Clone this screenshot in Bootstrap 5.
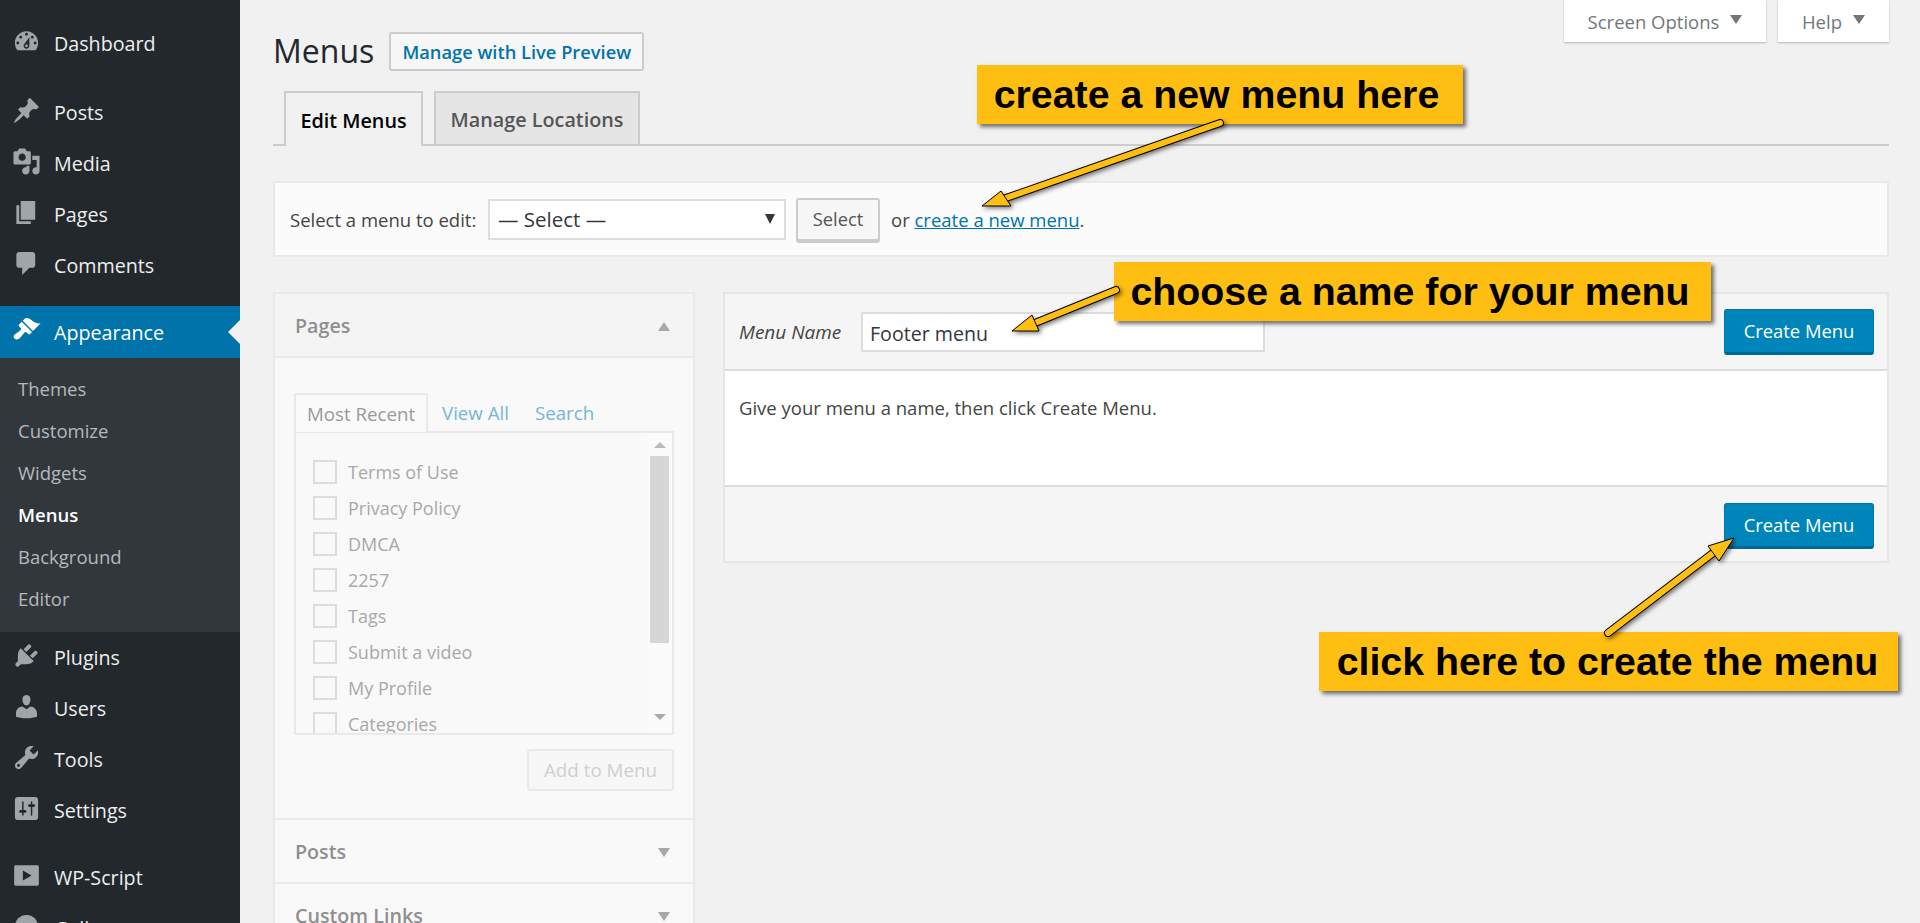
<!DOCTYPE html>
<html lang="en">

<head>
    <meta charset="UTF-8">
    <meta name="viewport" content="width=device-width, initial-scale=1.0">
    <title>Menus</title>
    <link rel="stylesheet" href="https://cdn.jsdelivr.net/npm/bootstrap@5.3.0/dist/css/bootstrap.min.css">
    <style>
        html, body {
            height: 923px;
            overflow: hidden;
        }

        body {
            background: #f1f1f1;
            color: #444;
            font-family: "Open Sans", sans-serif;
            font-size: 18.5px;
            position: relative;
        }

        /* sidebar */
        .wp-side {
            width: 240px;
            height: 923px;
            flex: none;
            background: #23282d;
            padding-top: 18px;
            overflow: hidden;
        }

        .wp-item {
            height: 51px;
            flex: none;
            padding-top: 1px;
            color: #eee;
            font-size: 19.7px;
            text-decoration: none;
            position: relative;
        }

        .wp-item svg {
            width: 29px;
            height: 29px;
            margin: -6px 13.5px 0 11.5px;
            fill: #a0a5aa;
            flex: none;
        }

        .wp-sep {
            height: 15px;
            flex: none;
        }

        .wp-item.wp-active {
            background: #0073aa;
            color: #fff;
            height: 52px;
        }

        .wp-item.wp-active svg {
            fill: #fff;
        }

        .wp-item.wp-active::after {
            content: "";
            position: absolute;
            right: 0;
            top: 14px;
            border: 12px solid transparent;
            border-right-color: #f1f1f1;
            border-left-width: 0;
        }

        .wp-sub {
            background: #32373c;
            padding: 10px 0 12px;
        }

        .wp-sub a {
            height: 42px;
            padding-left: 18px;
            color: #b4b9be;
            font-size: 18.5px;
            text-decoration: none;
        }

        .wp-sub a.wp-current {
            color: #fff;
            font-weight: 600;
        }

        /* main area */
        .wp-main {
            padding: 0 31px 0 33px;
            min-width: 0;
        }

        .wp-meta {
            height: 42px;
            margin-bottom: -10px;
        }

        .wp-meta-btn {
            height: 42px;
            padding-top: 2px;
            background: #fff;
            color: #72777c;
            font-size: 18.5px;
            box-shadow: 0 1px 2px rgba(0, 0, 0, .25);
        }

        .wp-meta-btn i {
            border: 6px solid transparent;
            border-top: 9px solid #72777c;
            border-bottom-width: 0;
            margin-left: 11px;
            margin-top: -6px;
        }

        .wp-title {
            height: 39px;
        }

        .wp-title h1 {
            font-size: 32px;
            font-weight: 400;
            color: #23282d;
            margin: 0 15px 0 0;
        }

        .wp-preview {
            height: 39px;
            width: 255px;
            padding: 0;
            background: #f7f7f7;
            border: 2px solid #ccc;
            border-radius: 3px;
            color: #0073aa;
            font-size: 18.3px;
            font-weight: 600;
        }

        .wp-tabs {
            margin-top: 20px;
            height: 55px;
            padding-left: 11px;
            border-bottom: 2px solid #ccc;
        }

        .wp-tab {
            height: 55px;
            padding-top: 3px;
            border: 2px solid #ccc;
            border-bottom: 0;
            font-size: 19.8px;
            font-weight: 600;
        }

        .wp-tab-on {
            width: 139px;
            background: #f1f1f1;
            color: #000;
            position: relative;
            z-index: 1;
        }

        .wp-tab-off {
            width: 206px;
            margin-left: 11px;
            background: #e5e5e5;
            color: #555;
            height: 53px;
        }

        .wp-bar {
            margin-top: 35px;
            height: 76px;
            background: #fbfbfb;
            border: 2px solid #e9e9e9;
            padding-left: 15px;
        }

        .wp-bar label {
            width: 198px;
            flex: none;
            padding-top: 2px;
            white-space: nowrap;
        }

        .wp-bar span {
            padding-top: 2px;
        }

        .wp-select {
            width: 298px;
            height: 41px;
            border: 2px solid #ddd;
            border-radius: 0;
            padding: 1px 8px 0;
            color: #32373c;
            font-size: 20.5px;
            background-position: right 8px center;
            background-size: 12px 10px;
            background-image: url("data:image/svg+xml,%3Csvg xmlns='http://www.w3.org/2000/svg' viewBox='0 0 12 10'%3E%3Cpath d='M1 0h10L6 10z' fill='%2332373c'/%3E%3C/svg%3E");
        }

        .wp-select-btn {
            width: 84px;
            height: 43px;
            margin: 0 11px 0 10px;
            padding: 0;
            background: #f7f7f7;
            border: 2px solid #ccc;
            border-radius: 3px;
            box-shadow: 0 2px 0 #ccc;
            color: #555;
            font-size: 18.3px;
        }

        .wp-bar a {
            color: #0073aa;
        }

        .wp-cols {
            margin-top: 35px;
            gap: 28px;
        }

        /* left accordion, all faded */
        .wp-left {
            width: 422px;
            flex: none;
            background: #f9f9f9;
            border: 2px solid #e9e9e9;
            border-bottom: 0;
        }

        .wp-acc {
            height: 64px;
            padding: 2px 23px 0 20px;
            color: #8f8f8f;
            font-size: 19.7px;
            font-weight: 600;
            border-bottom: 2px solid #e9e9e9;
        }

        .wp-acc i {
            border: 6px solid transparent;
            border-top: 9px solid #a8a8a8;
            border-bottom-width: 0;
        }

        .wp-acc i.wp-up {
            border-top-width: 0;
            border-bottom: 9px solid #a8a8a8;
        }

        .wp-acc-open {
            background: #f4f4f4;
        }

        .wp-acc-body {
            height: 462px;
            padding: 36px 19px 0 19px;
            border-bottom: 2px solid #e9e9e9;
        }

        .wp-mini-tabs {
            height: 37px;
            font-size: 18.7px;
        }

        .wp-mini-tabs span {
            padding: 2px 13px 0;
            color: #75b6d4;
        }

        .wp-mini-tabs span.wp-mini-on {
            width: 134px;
            padding: 2px 0 0 11px;
            color: #999;
            height: 39px;
            background: #fafafa;
            border: 2px solid #e9e9e9;
            border-bottom: 0;
            position: relative;
            margin-right: 1px;
            white-space: nowrap;
        }

        .wp-list-box {
            height: 304px;
            border: 2px solid #e9e9e9;
            overflow: hidden;
        }

        .wp-list {
            padding: 21px 0 0 17px;
        }

        .wp-row {
            height: 36px;
            flex: none;
            color: #a8a8a8;
            font-size: 18px;
        }

        .wp-row .form-check-input {
            width: 24px;
            height: 24px;
            margin: 0 11px 0 0;
            border: 2px solid #ddd;
            border-radius: 0;
            background-color: transparent;
            opacity: 1;
        }

        .wp-scroll {
            width: 25px;
            flex: none;
            padding: 0 3px;
            background: #fbfbfb;
        }

        .wp-scroll b {
            display: block;
            height: 187px;
            background: #d6d6d6;
        }

        .wp-tri-up, .wp-tri-down {
            border: 6px solid transparent;
            width: 0;
            height: 0;
            margin: 0 auto;
        }

        .wp-tri-up {
            border-bottom: 6px solid #bbb;
            border-top-width: 0;
            margin-top: 9px;
            margin-bottom: 8px;
        }

        .wp-tri-down {
            border-top: 6px solid #aaa;
            border-bottom-width: 0;
            margin-top: 71px;
        }

        .wp-add, .wp-add:disabled {
            width: 147px;
            height: 42px;
            margin-top: 14px;
            padding: 0;
            background: #f7f7f7;
            border: 2px solid #e9e9e9;
            border-radius: 3px;
            color: #cfcfcf;
            font-size: 18.8px;
            opacity: 1;
        }

        /* right panel */
        .wp-right {
            background: #f5f5f5;
            border: 2px solid #e5e5e5;
            height: 271px;
        }

        .wp-right-head {
            height: 77px;
            padding: 0 13px 0 14px;
            border-bottom: 2px solid #ddd;
        }

        .wp-right-body {
            height: 116px;
            padding: 23px 14px;
            background: #fff;
            border-bottom: 2px solid #ddd;
        }

        .wp-right-foot {
            height: 77px;
            padding: 0 13px 0 14px;
        }

        .wp-right-head em {
            width: 122px;
            flex: none;
            padding-top: 2px;
            font-size: 19px;
            white-space: nowrap;
        }

        .wp-name {
            width: 404px;
            height: 40px;
            border: 2px solid #ddd;
            border-radius: 0;
            padding: 3px 7px 0;
            color: #32373c;
            font-size: 19.6px;
        }

        .wp-create {
            width: 150px;
            height: 46px;
            padding: 1px 0 0;
            background: #0085ba;
            border: 1px solid #0073aa;
            border-bottom: 3px solid #006799;
            border-radius: 3px;
            color: #fff;
            font-size: 18.4px;
        }

        /* yellow notes over the screenshot */
        .wp-note {
            position: absolute;
            height: 59px;
            background: #ffbf12;
            color: #000;
            font-family: "Liberation Sans", Arial, sans-serif;
            font-size: 39.3px;
            font-weight: 700;
            white-space: nowrap;
            box-shadow: 3px 3px 4px rgba(0, 0, 0, .55);
        }

        .wp-note-1 {
            left: 977px;
            top: 65px;
            width: 486px;
            padding-right: 7px;
        }

        .wp-note-2 {
            left: 1114px;
            top: 262px;
            width: 597px;
            padding-right: 5px;
        }

        .wp-note-3 {
            left: 1319px;
            top: 632px;
            width: 579px;
            padding-right: 2px;
        }

        .wp-arrows {
            position: absolute;
            left: 0;
            top: 0;
            width: 1920px;
            height: 923px;
            pointer-events: none;
            filter: drop-shadow(2px 2px 2px rgba(0, 0, 0, .5));
        }

        .wp-shaft-o {
            stroke: #000;
            stroke-width: 8;
            stroke-linecap: round;
        }

        .wp-shaft-i {
            stroke: #ffbf12;
            stroke-width: 6;
            stroke-linecap: round;
        }

        .wp-head {
            fill: #ffbf12;
            stroke: #000;
            stroke-width: 1;
        }
    </style>
</head>

<body>
    <div class="d-flex">
        <nav class="wp-side d-flex flex-column">
            <a class="wp-item d-flex align-items-center"><svg viewBox="0 0 20 20"><path d="M3.76 16h12.48c1.1-1.37 1.76-3.11 1.76-5 0-4.42-3.58-8-8-8s-8 3.58-8 8c0 1.89.66 3.63 1.76 5zM10 4c.55 0 1 .45 1 1s-.45 1-1 1-1-.45-1-1 .45-1 1-1zM6 6c.55 0 1 .45 1 1s-.45 1-1 1-1-.45-1-1 .45-1 1-1zm8 0c.55 0 1 .45 1 1s-.45 1-1 1-1-.45-1-1 .45-1 1-1zm-5.37 5.55L12 7v6c0 1.1-.9 2-2 2s-2-.9-2-2c0-.57.24-1.08.63-1.45zM4 10c.55 0 1 .45 1 1s-.45 1-1 1-1-.45-1-1 .45-1 1-1zm12 0c.55 0 1 .45 1 1s-.45 1-1 1-1-.45-1-1 .45-1 1-1zm-5 3c0-.55-.45-1-1-1s-1 .45-1 1 .45 1 1 1 1-.45 1-1z"/></svg>Dashboard</a>
            <div class="wp-sep" style="height:18px"></div>
            <a class="wp-item d-flex align-items-center"><svg viewBox="0 0 20 20"><path d="M10.44 3.02l1.82-1.82 6.36 6.35-1.83 1.82c-1.05-.68-2.48-.57-3.41.36l-.75.75c-.92.93-1.04 2.35-.35 3.41l-1.83 1.82-2.41-2.41-2.8 2.79c-.42.42-3.38 2.71-3.8 2.29s1.86-3.39 2.28-3.81l2.79-2.79L4.1 9.36l1.83-1.82c1.05.69 2.48.57 3.4-.36l.75-.75c.93-.92 1.05-2.35.36-3.41z"/></svg>Posts</a>
            <a class="wp-item d-flex align-items-center"><svg viewBox="0 0 20 20"><path d="M13 11V4c0-.55-.45-1-1-1h-1.67L9 1H5L3.67 3H2c-.55 0-1 .45-1 1v7c0 .55.45 1 1 1h10c.55 0 1-.45 1-1zM7 4.5c1.38 0 2.5 1.12 2.5 2.5S8.38 9.5 7 9.5 4.5 8.38 4.5 7 5.62 4.5 7 4.5zM14 6h5v10.5c0 1.38-1.12 2.5-2.5 2.5S14 17.88 14 16.5s1.12-2.5 2.5-2.5c.17 0 .34.02.5.05V9h-3V6zm-4 8.05V13h2v3.5c0 1.38-1.12 2.5-2.5 2.5S7 17.88 7 16.5 8.12 14 9.5 14c.17 0 .34.02.5.05z"/></svg>Media</a>
            <a class="wp-item d-flex align-items-center"><svg viewBox="0 0 20 20"><path d="M6 15V2h10v13H6zm-1 1h8v2H3V5h2v11z"/></svg>Pages</a>
            <a class="wp-item d-flex align-items-center"><svg viewBox="0 0 20 20"><path d="M5 2h9c1.1 0 2 .9 2 2v7c0 1.1-.9 2-2 2h-2l-5 5v-5H5c-1.1 0-2-.9-2-2V4c0-1.1.9-2 2-2z"/></svg>Comments</a>
            <div class="wp-sep"></div>
            <a class="wp-item wp-active d-flex align-items-center"><svg viewBox="0 0 20 20"><path d="M14.48 11.06L7.41 3.99l1.5-1.5c.5-.56 2.3-.47 3.51.32 1.21.8 1.43 1.28 2.91 2.1 1.18.64 2.45 1.26 4.45.85zm-.71.71L6.7 4.7 4.93 6.47c-.39.39-.39 1.02 0 1.41l1.06 1.06c.39.39.39 1.03 0 1.42-.6.6-1.43 1.11-2.21 1.69-.35.26-.7.53-1.01.84C1.43 13.23.4 14.89 1.75 16.24c1.36 1.36 3.01.33 4.36-1.01.3-.31.58-.66.84-1.01.58-.78 1.09-1.61 1.69-2.21.39-.39 1.02-.39 1.41 0l1.06 1.06c.39.39 1.02.39 1.41 0z"/></svg>Appearance</a>
            <div class="wp-sub d-flex flex-column">
                <a class="d-flex align-items-center">Themes</a>
                <a class="d-flex align-items-center">Customize</a>
                <a class="d-flex align-items-center">Widgets</a>
                <a class="d-flex align-items-center wp-current">Menus</a>
                <a class="d-flex align-items-center">Background</a>
                <a class="d-flex align-items-center">Editor</a>
            </div>
            <a class="wp-item d-flex align-items-center"><svg viewBox="0 0 20 20"><path d="M13.11 4.36L9.87 7.6 8 5.73l3.24-3.24c.35-.34 1.05-.2 1.56.32.52.51.66 1.21.31 1.55zm-8 1.77l.91-1.12 9.01 9.01-1.19.84c-.71.71-2.63 1.16-3.82 1.16H6.14L4.9 17.26c-.59.59-1.54.59-2.12 0-.59-.58-.59-1.53 0-2.12l1.24-1.24v-3.88c0-1.13.4-3.19 1.09-3.89zm7.26 3.97l3.24-3.24c.34-.35 1.04-.21 1.55.31.52.51.66 1.21.31 1.55l-3.24 3.25z"/></svg>Plugins</a>
            <a class="wp-item d-flex align-items-center"><svg viewBox="0 0 20 20"><path d="M10 9.25c-2.27 0-2.73-3.44-2.73-3.44C7 4.02 7.82 2 9.97 2c2.16 0 2.98 2.02 2.71 3.81 0 0-.41 3.44-2.68 3.44zm0 2.57L12.72 10c2.39 0 4.52 2.33 4.52 4.53v2.49s-3.65 1.13-7.24 1.13c-3.65 0-7.24-1.13-7.24-1.13v-2.49c0-2.25 1.94-4.48 4.47-4.48z"/></svg>Users</a>
            <a class="wp-item d-flex align-items-center"><svg viewBox="0 0 20 20"><path d="M16.68 9.77c-1.34 1.34-3.3 1.67-4.95.99l-5.41 6.52c-.99.99-2.59.99-3.58 0s-.99-2.59 0-3.57l6.52-5.42c-.68-1.65-.35-3.61.99-4.95 1.28-1.28 3.12-1.62 4.72-1.06l-2.89 2.89 2.82 2.82 2.86-2.87c.53 1.58.18 3.39-1.08 4.65zM3.81 16.21c.4.39 1.04.39 1.43 0 .4-.4.4-1.04 0-1.43-.39-.4-1.03-.4-1.43 0-.39.39-.39 1.03 0 1.43z"/></svg>Tools</a>
            <a class="wp-item d-flex align-items-center"><svg viewBox="0 0 20 20"><path d="M18 16V4c0-1.1-.9-2-2-2H4c-1.1 0-2 .9-2 2v12c0 1.1.9 2 2 2h12c1.1 0 2-.9 2-2zM8 11h1c.55 0 1 .45 1 1s-.45 1-1 1H8v1.5c0 .28-.22.5-.5.5s-.5-.22-.5-.5V13H6c-.55 0-1-.45-1-1s.45-1 1-1h1V5.5c0-.28.22-.5.5-.5s.5.22.5.5V11zm5-2h-1c-.55 0-1-.45-1-1s.45-1 1-1h1V5.5c0-.28.22-.5.5-.5s.5.22.5.5V7h1c.55 0 1 .45 1 1s-.45 1-1 1h-1v5.5c0 .28-.22.5-.5.5s-.5-.22-.5-.5V9z"/></svg>Settings</a>
            <div class="wp-sep" style="height:16px"></div>
            <a class="wp-item d-flex align-items-center"><svg viewBox="0 0 20 20"><path fill-rule="evenodd" d="M2.5 3h15c.55 0 1 .45 1 1v12c0 .55-.45 1-1 1h-15c-.55 0-1-.45-1-1V4c0-.55.45-1 1-1zM7.5 6.5v7l6-3.5z"/></svg>WP-Script</a>
            <a class="wp-item d-flex align-items-center"><svg viewBox="0 0 20 20"><path d="M10 2a8 8 0 1 0 0 16 8 8 0 0 0 0-16z"/></svg>Gallery</a>
        </nav>

        <main class="wp-main flex-grow-1">
            <div class="wp-meta d-flex justify-content-end gap-2">
                <div class="wp-meta-btn d-flex align-items-center justify-content-center" style="width:202px">Screen Options<i></i></div>
                <div class="wp-meta-btn d-flex align-items-center justify-content-center ms-1" style="width:111px">Help<i></i></div>
            </div>

            <div class="wp-title d-flex align-items-center">
                <h1>Menus</h1>
                <button class="btn wp-preview">Manage with Live Preview</button>
            </div>

            <div class="wp-tabs d-flex">
                <div class="wp-tab wp-tab-on d-flex align-items-center justify-content-center">Edit Menus</div>
                <div class="wp-tab wp-tab-off d-flex align-items-center justify-content-center">Manage Locations</div>
            </div>

            <div class="wp-bar d-flex align-items-center">
                <label for="menu-pick">Select a menu to edit:</label>
                <select id="menu-pick" class="form-select wp-select"><option>— Select —</option></select>
                <button class="btn wp-select-btn">Select</button>
                <span>or <a href="#">create a new menu</a>.</span>
            </div>

            <div class="wp-cols d-flex">
                <div class="wp-left">
                    <div class="wp-acc wp-acc-open d-flex align-items-center justify-content-between">Pages<i class="wp-up"></i></div>
                    <div class="wp-acc-body">
                        <div class="wp-mini-tabs d-flex align-items-center">
                            <span class="wp-mini-on d-flex align-items-center">Most Recent</span>
                            <span>View All</span>
                            <span>Search</span>
                        </div>
                        <div class="wp-list-box d-flex">
                            <div class="wp-list flex-grow-1 d-flex flex-column">
                                <div class="wp-row d-flex align-items-center"><input class="form-check-input" type="checkbox" disabled>Terms of Use</div>
                                <div class="wp-row d-flex align-items-center"><input class="form-check-input" type="checkbox" disabled>Privacy Policy</div>
                                <div class="wp-row d-flex align-items-center"><input class="form-check-input" type="checkbox" disabled>DMCA</div>
                                <div class="wp-row d-flex align-items-center"><input class="form-check-input" type="checkbox" disabled>2257</div>
                                <div class="wp-row d-flex align-items-center"><input class="form-check-input" type="checkbox" disabled>Tags</div>
                                <div class="wp-row d-flex align-items-center"><input class="form-check-input" type="checkbox" disabled>Submit a video</div>
                                <div class="wp-row d-flex align-items-center"><input class="form-check-input" type="checkbox" disabled>My Profile</div>
                                <div class="wp-row d-flex align-items-center"><input class="form-check-input" type="checkbox" disabled>Categories</div>
                            </div>
                            <div class="wp-scroll">
                                <div class="wp-tri-up"></div>
                                <b></b>
                                <div class="wp-tri-down"></div>
                            </div>
                        </div>
                        <div class="d-flex justify-content-end">
                            <button class="btn wp-add" disabled>Add to Menu</button>
                        </div>
                    </div>
                    <div class="wp-acc d-flex align-items-center justify-content-between">Posts<i></i></div>
                    <div class="wp-acc d-flex align-items-center justify-content-between">Custom Links<i></i></div>
                </div>

                <div class="wp-right flex-grow-1">
                    <div class="wp-right-head d-flex align-items-center">
                        <em>Menu Name</em>
                        <input class="form-control wp-name" type="text" value="Footer menu">
                        <button class="btn wp-create ms-auto">Create Menu</button>
                    </div>
                    <div class="wp-right-body">Give your menu a name, then click Create Menu.</div>
                    <div class="wp-right-foot d-flex align-items-center justify-content-end">
                        <button class="btn wp-create">Create Menu</button>
                    </div>
                </div>
            </div>
        </main>
    </div>

    <div class="wp-note wp-note-1 d-flex align-items-center justify-content-center">create a new menu here</div>
    <div class="wp-note wp-note-2 d-flex align-items-center justify-content-center">choose a name for your menu</div>
    <div class="wp-note wp-note-3 d-flex align-items-center justify-content-center">click here to create the menu</div>

    <svg class="wp-arrows" viewBox="0 0 1920 923">
        <line class="wp-shaft-o" x1="1220" y1="123" x2="1006" y2="198"/>
        <line class="wp-shaft-i" x1="1220" y1="123" x2="1006" y2="198"/>
        <polygon class="wp-head" points="982,206 1001,191 1011,206"/>
        <line class="wp-shaft-o" x1="1116" y1="290" x2="1035" y2="323"/>
        <line class="wp-shaft-i" x1="1116" y1="290" x2="1035" y2="323"/>
        <polygon class="wp-head" points="1012,331 1032,315 1039,331"/>
        <line class="wp-shaft-o" x1="1608" y1="633" x2="1713" y2="553"/>
        <line class="wp-shaft-i" x1="1608" y1="633" x2="1713" y2="553"/>
        <polygon class="wp-head" points="1734,538 1708,546 1719,561"/>
    </svg>

    <script src="https://cdn.jsdelivr.net/npm/bootstrap@5.3.0/dist/js/bootstrap.bundle.min.js"></script>
</body>

</html>
